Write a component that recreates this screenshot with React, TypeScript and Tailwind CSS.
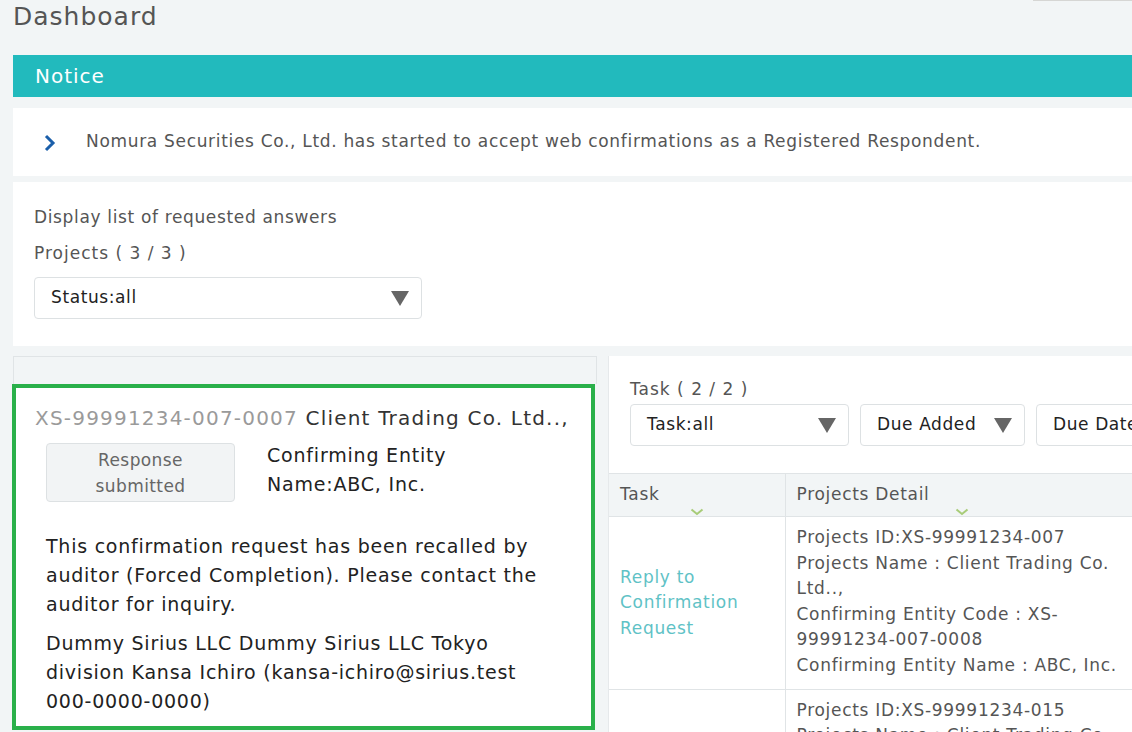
import React from "react";

function Triangle() {
  return (
    <svg width="18" height="15" viewBox="0 0 18 15" className="shrink-0">
      <path d="M0 0 H18 L9 15 Z" fill="#666" />
    </svg>
  );
}

function Select({ label, width }: { label: string; width: string }) {
  return (
    <div
      className={`${width} h-[42px] shrink-0 flex items-center justify-between pl-[16px] pr-[12px] bg-white border border-[#dde1e3] rounded-[4px] text-[17px] tracking-[0.6px] text-[#222]`}
    >
      <span className="whitespace-nowrap">{label}</span>
      <Triangle />
    </div>
  );
}

function SortMark() {
  return (
    <svg width="14" height="8" viewBox="0 0 14 8" className="mx-auto mt-[2px]">
      <path d="M1.5 1.5 L7 6 L12.5 1.5" fill="none" stroke="#a8cc78" strokeWidth="2" />
    </svg>
  );
}

export default function App() {
  return (
    <div className="relative w-[1132px] h-[732px] overflow-hidden bg-[#f2f5f6] font-['DejaVu_Sans',sans-serif] text-[#555]">
      {/* edge of a control scrolled off the top */}
      <div className="absolute top-0 right-0 w-[99px] h-[1px] bg-[#d6d6d4]" />

      <div className="w-[1200px] pl-[13px]">
        <h1 className="h-[55px] pt-[1px] text-[25px] leading-[32px] tracking-[1px] text-[#555] font-normal">Dashboard</h1>

        {/* Notice */}
        <div className="h-[42px] bg-[#22babd] flex items-center pl-[22px] text-white text-[20px] tracking-[1px]">Notice</div>
        <div className="mt-[11px] h-[68px] bg-white flex items-center">
          <svg width="13" height="18" viewBox="0 0 13 18" className="ml-[30px] mt-[2px]">
            <path d="M3 2 L10 9 L3 16" fill="none" stroke="#1b5faa" strokeWidth="3" />
          </svg>
          <span className="ml-[30px] text-[17px] tracking-[0.68px] text-[#555] whitespace-nowrap">
            Nomura Securities Co., Ltd. has started to accept web confirmations as a Registered Respondent.
          </span>
        </div>

        {/* Filter */}
        <div className="mt-[6px] h-[164px] bg-white pl-[21px] pt-[22px]">
          <div className="text-[17px] leading-[26px] tracking-[0.65px]">Display list of requested answers</div>
          <div className="mt-[10px] text-[17px] leading-[26px] tracking-[1px]">Projects ( 3 / 3 )</div>
          <div className="mt-[11px]">
            <Select label="Status:all" width="w-[388px]" />
          </div>
        </div>

        {/* Panels */}
        <div className="mt-[10px] flex items-start">
          {/* Left panel */}
          <div className="w-[584px] shrink-0">
            <div className="h-[28px] border-t border-l border-r border-[#e0e4e6] bg-[#f2f5f6]" />
            <div className="-ml-[1px] w-[583px] border-4 border-[#2ab04a] bg-white pl-[19px] pr-[10px] pt-[16px] pb-[10px] text-[#222]">
              <div className="text-[20px] leading-[28px] tracking-[1.2px] whitespace-nowrap">
                <span className="text-[#9a9a9a]">XS-99991234-007-0007</span>{" "}
                <span className="text-[#333]">Client Trading Co. Ltd..,</span>
              </div>
              <div className="mt-[11px] ml-[11px] flex items-start">
                <div className="w-[189px] h-[59px] shrink-0 bg-[#f2f4f5] border border-[#dde1e3] rounded-[4px] flex items-center justify-center text-center text-[17px] leading-[26px] tracking-[0.4px] text-[#666]">
                  Response
                  <br />
                  submitted
                </div>
                <div className="ml-[32px] -mt-[2px] text-[19px] leading-[29px] tracking-[0.8px] text-[#222]">
                  Confirming Entity
                  <br />
                  Name:ABC, Inc.
                </div>
              </div>
              <div className="ml-[11px] mt-[30px] w-[505px] text-[19px] leading-[29px] tracking-[0.76px]">
                This confirmation request has been recalled by auditor (Forced Completion). Please contact the auditor for inquiry.
              </div>
              <div className="ml-[11px] mt-[10px] w-[505px] text-[19px] leading-[29px] tracking-[0.76px]">
                Dummy Sirius LLC Dummy Sirius LLC Tokyo division Kansa Ichiro (kansa-ichiro@sirius.test 000-0000-0000)
              </div>
            </div>
          </div>

          {/* Right panel */}
          <div className="ml-[11px] flex-1 bg-white border-l border-[#e6e9eb] pt-[21px]">
            <div className="pl-[21px] text-[17px] leading-[24px] tracking-[1px]">Task ( 2 / 2 )</div>
            <div className="pl-[21px] mt-[3px] flex gap-[11px]">
              <Select label="Task:all" width="w-[219px]" />
              <Select label="Due Added" width="w-[165px]" />
              <Select label="Due Date" width="w-[165px]" />
            </div>

            <table className="mt-[27px] border-collapse text-[17px] tracking-[0.7px]">
              <thead>
                <tr className="bg-[#f2f5f6] border-y border-[#e0e4e6]">
                  <th className="w-[176px] h-[42px] px-[11px] pt-[8px] font-normal text-left align-top leading-[24px]">
                    Task
                    <SortMark />
                  </th>
                  <th className="w-[352px] h-[42px] px-[11px] pt-[8px] font-normal text-left align-top leading-[24px] border-l border-[#e0e4e6]">
                    Projects Detail
                    <SortMark />
                  </th>
                </tr>
              </thead>
              <tbody>
                <tr className="border-b border-[#e0e4e6]">
                  <td className="h-[172px] px-[11px] align-middle text-[#5fc2c6] leading-[25.5px]">
                    Reply to
                    <br />
                    Confirmation
                    <br />
                    Request
                  </td>
                  <td className="px-[11px] pt-[8px] pb-[10px] align-top leading-[25.6px] border-l border-[#e0e4e6]">
                    <div className="w-[330px]">
                      Projects ID:XS-99991234-007
                      <br />
                      Projects Name : Client Trading Co. Ltd..,
                      <br />
                      Confirming Entity Code : XS-99991234-007-0008
                      <br />
                      Confirming Entity Name : ABC, Inc.
                    </div>
                  </td>
                </tr>
                <tr>
                  <td className="px-[11px] align-middle" />
                  <td className="px-[11px] pt-[8px] align-top leading-[25.6px] border-l border-[#e0e4e6]">
                    <div className="w-[330px]">
                      Projects ID:XS-99991234-015
                      <br />
                      Projects Name : Client Trading Co. Ltd..,
                    </div>
                  </td>
                </tr>
              </tbody>
            </table>
          </div>
        </div>
      </div>
    </div>
  );
}
